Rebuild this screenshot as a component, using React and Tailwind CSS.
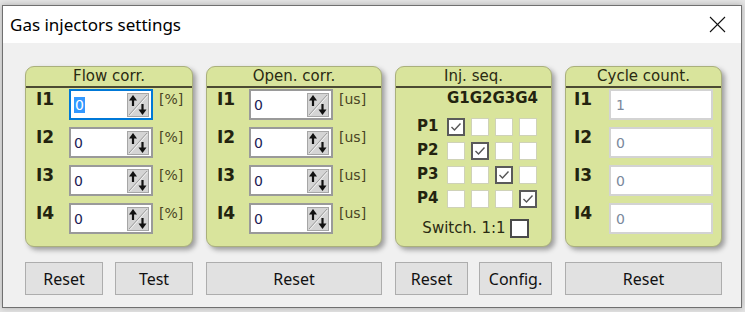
import React from 'react';

const Spinner = () => (
  <svg width="22" height="24" viewBox="0 0 22 24" className="shrink-0">
    <rect x="0.5" y="0.5" width="21" height="23" fill="#d4d4d4" stroke="#a6a6a6" />
    <line x1="2" y1="22" x2="20" y2="2" stroke="#9c9c9c" strokeWidth="1" />
    <line x1="3" y1="22.5" x2="20.5" y2="3" stroke="#f2f2f2" strokeWidth="1" />
    <line x1="6" y1="6" x2="6" y2="13" stroke="#111" strokeWidth="2.2" />
    <polygon points="6,2 2,7.5 10,7.5" fill="#111" />
    <line x1="15.5" y1="11" x2="15.5" y2="18" stroke="#111" strokeWidth="2.2" />
    <polygon points="15.5,22 11.5,16.5 19.5,16.5" fill="#111" />
  </svg>
);

const Check = ({ checked, size = 'w-[18px] h-[18px]' }) => (
  <div
    className={`${size} bg-white flex items-center justify-center ${
      checked ? 'border-2 border-[#5a5a5a]' : 'border border-[#cfd2b8]'
    }`}
  >
    {checked && (
      <svg width="14" height="14" viewBox="0 0 14 14">
        <polyline points="2.5,7 5.5,10 11.5,3.5" fill="none" stroke="#555" strokeWidth="1.4" />
      </svg>
    )}
  </div>
);

const Panel = ({ title, className = '', children }) => (
  <div
    className={`h-[181px] rounded-[9px] border border-[#aab07c] bg-[#d9e49c] shadow-[3px_3px_5px_rgba(0,0,0,0.35)] flex flex-col ${className}`}
  >
    <div className="h-[19px] text-center text-[15px] leading-[18px] text-[#2a2a12]">{title}</div>
    <div className="h-[2px] bg-[#4b4a33]" />
    {children}
  </div>
);

const Btn = ({ children, className = 'flex-1' }) => (
  <button className={`${className} h-[33px] bg-[#e1e1e1] border border-[#adadad] text-[16px] text-[#111] font-['Noto_Sans',sans-serif]`}>
    {children}
  </button>
);

const SpinRow = ({ label, unit, labelW, focused }) => (
  <div className="flex items-start h-[31px]">
    <div className={`${labelW} text-[17px] leading-[20px] font-bold text-[#23230f]`}>{label}</div>
    <div
      className={`w-[84px] h-[31px] bg-white border-2 ${
        focused ? 'border-[#0078d7]' : 'border-[#9a9a9a]'
      } flex items-center justify-between pl-[3px] pr-[2px]`}
    >
      <span className="text-[14px] leading-[18px] text-[#1c1c55]">
        {focused ? <span className="bg-[#3399ff] text-white px-[1px]">0</span> : '0'}
      </span>
      <Spinner />
    </div>
    <div className="ml-[6px] text-[14px] leading-[20px] text-[#4a4424]">{unit}</div>
  </div>
);

const rows = ['I1', 'I2', 'I3', 'I4'];

export default function App() {
  return (
    <div className="w-[745px] h-[312px] bg-[#e4e4e4] pt-[5px] pl-[2px] font-['DejaVu_Sans',sans-serif]">
      <div className="w-[740px] h-[303px] border border-[#707070] bg-[#f0f0f0] shadow-[0_0_6px_rgba(0,0,0,0.25)] flex flex-col">
        <div className="h-[37px] bg-white flex items-center justify-between pl-[7px] pr-[15px] font-['Noto_Sans',sans-serif]">
          <span className="text-[17px] leading-[23px] text-black">Gas injectors settings</span>
          <svg width="17" height="17" viewBox="0 0 17 17">
            <line x1="1" y1="1" x2="16" y2="16" stroke="#111" strokeWidth="1.1" />
            <line x1="16" y1="1" x2="1" y2="16" stroke="#111" strokeWidth="1.1" />
          </svg>
        </div>

        <div className="flex gap-[13px] pl-[22px] pt-[23px]">
          {/* Flow corr. */}
          <div className="w-[168px] flex flex-col gap-[15px]">
            <Panel title="Flow corr.">
              <div className="flex flex-col gap-[7px] mt-[1px] pl-[10px]">
                {rows.map((r, i) => (
                  <SpinRow key={r} label={r} unit="[%]" labelW="w-[33px]" focused={i === 0} />
                ))}
              </div>
            </Panel>
            <div className="flex gap-[12px]">
              <Btn>Reset</Btn>
              <Btn>Test</Btn>
            </div>
          </div>

          {/* Open. corr. */}
          <div className="w-[176px] flex flex-col gap-[15px]">
            <Panel title="Open. corr.">
              <div className="flex flex-col gap-[7px] mt-[1px] pl-[10px]">
                {rows.map((r) => (
                  <SpinRow key={r} label={r} unit="[us]" labelW="w-[32px]" />
                ))}
              </div>
            </Panel>
            <div className="flex">
              <Btn>Reset</Btn>
            </div>
          </div>

          {/* Inj. seq. */}
          <div className="w-[157px] flex flex-col gap-[15px]">
            <Panel title="Inj. seq.">
              <div className="pl-[51px] mt-[1px] h-[18px] text-[15px] leading-[18px] font-bold text-[#23230f]">G1G2G3G4</div>
              <div className="flex flex-col gap-[5px] mt-[10px] pl-[21px]">
                {['P1', 'P2', 'P3', 'P4'].map((p, i) => (
                  <div key={p} className="flex items-center h-[19px]">
                    <div className="w-[30px] text-[15px] font-bold text-[#23230f] leading-[19px]">{p}</div>
                    <div className="flex gap-[6px]">
                      {[0, 1, 2, 3].map((c) => (
                        <Check key={c} checked={c === i} />
                      ))}
                    </div>
                  </div>
                ))}
              </div>
              <div className="flex items-center justify-center gap-[4px] mt-[11px] pl-[4px]">
                <span className="text-[15px] leading-[19px] text-[#2a2a12]">Switch. 1:1</span>
                <div className="w-[19px] h-[19px] bg-white border-2 border-[#4a4a4a]" />
              </div>
            </Panel>
            <div className="flex gap-[11px]">
              <Btn>Reset</Btn>
              <Btn>Config.</Btn>
            </div>
          </div>

          {/* Cycle count. */}
          <div className="w-[157px] flex flex-col gap-[15px]">
            <Panel title="Cycle count.">
              <div className="flex flex-col gap-[7px] mt-[1px] pl-[8px]">
                {rows.map((r, i) => (
                  <div key={r} className="flex items-start h-[31px]">
                    <div className="w-[35px] text-[17px] leading-[20px] font-bold text-[#23230f]">{r}</div>
                    <div className="w-[104px] h-[31px] bg-white border-2 border-[#d3d3d3] flex items-center pl-[5px]">
                      <span className="text-[14px] leading-[18px] text-[#7a889c]">{i === 0 ? '1' : '0'}</span>
                    </div>
                  </div>
                ))}
              </div>
            </Panel>
            <div className="flex">
              <Btn>Reset</Btn>
            </div>
          </div>
        </div>
      </div>
    </div>
  );
}
